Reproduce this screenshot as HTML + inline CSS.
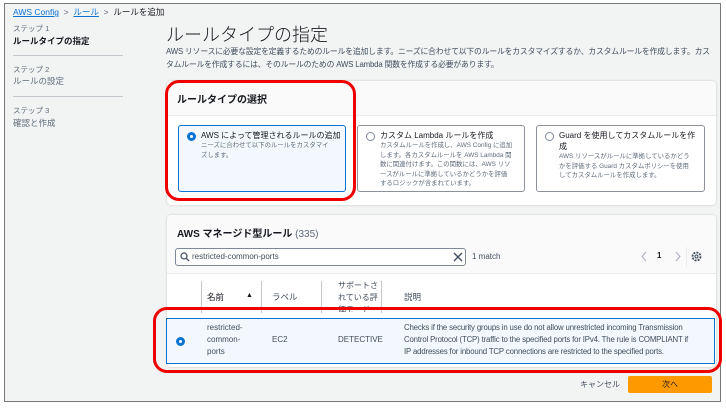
<!DOCTYPE html><html><head><meta charset="utf-8"><style>
*{margin:0;padding:0;box-sizing:border-box}
body{width:726px;height:409px;background:#fff;font-family:"Liberation Sans","Noto Sans CJK JP",sans-serif;color:#16191f;position:relative;overflow:hidden}
.a{position:absolute;white-space:nowrap}
.frame{position:absolute;left:4px;top:3px;width:717px;height:399px;border:1px solid #777;background:#f2f3f3}
.s{font-size:7.5px;color:#5f6b7a}
.link{color:#0972d3;text-decoration:underline}
.panel{position:absolute;background:#fff;border-radius:4px;box-shadow:0 0 2px rgba(0,0,0,.2)}
.card{position:absolute;border:1px solid #8d9199;border-radius:3px;background:#fff;padding:4px 4px 0 22px;font-size:8px;line-height:11px;white-space:nowrap;overflow:hidden}
.card small{display:block;font-size:6.4px;line-height:9.5px;color:#5f6b7a}
.rad{position:absolute;left:8px;top:6px;width:9px;height:9px;border:1px solid #7d8998;border-radius:50%;background:#fff}
.rad.on{border:3px solid #0972d3}
.red{position:absolute;border:3px solid #e00;border-radius:14px}
.th{font-size:8.5px;color:#16191f}
.sep{position:absolute;width:1px;background:#c6c6cd}
</style></head><body>
<div class="frame"></div>
<div class="a" style="left:13px;top:6px;font-size:8.5px"><span class="link">AWS Config</span> <span style="color:#5f6b7a">&nbsp;&gt;&nbsp;</span> <span class="link">ルール</span> <span style="color:#5f6b7a">&nbsp;&gt;&nbsp;</span> ルールを追加</div>
<div class="a s" style="left:13px;top:23px">ステップ 1</div>
<div class="a" style="left:13px;top:35px;font-size:8.5px;font-weight:bold">ルールタイプの指定</div>
<div class="a" style="left:13px;top:55px;width:110px;height:1px;background:#c6c6cd"></div>
<div class="a s" style="left:13px;top:64px">ステップ 2</div>
<div class="a" style="left:13px;top:75px;font-size:8.5px;color:#5f6b7a">ルールの設定</div>
<div class="a" style="left:13px;top:96px;width:110px;height:1px;background:#c6c6cd"></div>
<div class="a s" style="left:13px;top:105px">ステップ 3</div>
<div class="a" style="left:13px;top:117px;font-size:8.5px;color:#5f6b7a">確認と作成</div>
<div class="a" style="left:166px;top:21px;font-size:18px;font-weight:300">ルールタイプの指定</div>
<div class="a" style="left:166px;top:45px;font-size:7.8px;line-height:13px;color:#414d5c;letter-spacing:-0.15px">AWS リソースに必要な設定を定義するためのルールを追加します。ニーズに合わせて以下のルールをカスタマイズするか、カスタムルールを作成します。カス<br>タムルールを作成するには、そのルールのための AWS Lambda 関数を作成する必要があります。</div>

<div class="panel" style="left:167px;top:81px;width:549px;height:124px">
 <div style="height:35px;background:#fafafa;border-bottom:1px solid #e9ebed;border-radius:4px 4px 0 0"></div>
</div>
<div class="a" style="left:177px;top:91px;font-size:10px;font-weight:bold">ルールタイプの選択</div>
<div class="card" style="left:178px;top:125px;width:168px;height:67px;background:#f2f8fd;border-color:#0972d3"><span class="rad on"></span>AWS によって管理されるルールの追加<small>ニーズに合わせて以下のルールをカスタマイ<br>ズします。</small></div>
<div class="card" style="left:357px;top:125px;width:168px;height:67px"><span class="rad"></span>カスタム Lambda ルールを作成<small>カスタムルールを作成し、AWS Config に追加<br>します。各カスタムルールを AWS Lambda 関<br>数に関連付けます。この関数には、AWS リソ<br>ースがルールに準拠しているかどうかを評価<br>するロジックが含まれています。</small></div>
<div class="card" style="left:536px;top:125px;width:169px;height:67px"><span class="rad"></span>Guard を使用してカスタムルールを作<br>成<small>AWS リソースがルールに準拠しているかどう<br>かを評価する Guard カスタムポリシーを使用<br>してカスタムルールを作成します。</small></div>
<div class="red" style="left:165px;top:80px;width:191px;height:121px"></div>

<div class="panel" style="left:167px;top:215px;width:549px;height:152px">
 <div style="height:59px;background:#fafafa;border-bottom:1px solid #e9ebed;border-radius:4px 4px 0 0"></div>
</div>
<div class="a" style="left:177px;top:225px;font-size:10px;font-weight:bold">AWS マネージド型ルール <span style="font-weight:normal;color:#5f6b7a">(335)</span></div>
<div class="a" style="left:175px;top:248px;width:291px;height:18px;border:1px solid #7d8998;border-radius:3px;background:#fff"></div>
<svg class="a" style="left:180px;top:252px" width="10" height="10"><circle cx="4" cy="4" r="3" fill="none" stroke="#414d5c" stroke-width="1.2"/><line x1="6.3" y1="6.3" x2="9" y2="9" stroke="#414d5c" stroke-width="1.3"/></svg>
<div class="a" style="left:192px;top:252px;font-size:8px;color:#414d5c">restricted-common-ports</div>
<svg class="a" style="left:453px;top:252px" width="10" height="10"><path d="M1 1L9 9M9 1L1 9" stroke="#414d5c" stroke-width="1.4"/></svg>
<div class="a" style="left:472px;top:252px;font-size:8px;color:#414d5c">1 match</div>
<svg class="a" style="left:641px;top:251px" width="40" height="11"><path d="M5 1L1 5.5L5 10" fill="none" stroke="#aab" stroke-width="1"/><path d="M35 1L39 5.5L35 10" fill="none" stroke="#aab" stroke-width="1"/></svg>
<div class="a" style="left:657px;top:251px;font-size:8px;font-weight:bold">1</div>
<div class="a" style="left:686px;top:247px;width:1px;height:20px;background:#e9ebed"></div>
<svg class="a" style="left:691px;top:251px" width="11" height="11"><circle cx="5.5" cy="5.5" r="4" fill="none" stroke="#414d5c" stroke-width="1.8" stroke-dasharray="2 1.1"/><circle cx="5.5" cy="5.5" r="1.5" fill="none" stroke="#414d5c"/></svg>

<div class="sep" style="left:201px;top:281px;height:32px"></div>
<div class="a th" style="left:207px;top:291px">名前</div>
<div class="a" style="left:246px;top:292px;font-size:7px">▲</div>
<div class="sep" style="left:261px;top:281px;height:32px"></div>
<div class="a th" style="left:272px;top:291px;color:#414d5c">ラベル</div>
<div class="sep" style="left:321px;top:281px;height:32px"></div>
<div class="a th" style="left:338px;top:280px;font-size:8px;line-height:12px;height:32px;overflow:hidden;white-space:normal;width:40px;color:#414d5c">サポートされている評価モード</div>
<div class="sep" style="left:381px;top:281px;height:32px"></div>
<div class="a th" style="left:404px;top:291px;color:#414d5c">説明</div>

<div class="a" style="left:166px;top:318px;width:549px;height:46px;background:#f2f8fd;border:1px solid #0972d3"></div>
<div class="a" style="left:176px;top:337px;width:9px;height:9px;border:3px solid #0972d3;border-radius:50%;background:#fff"></div>
<div class="a" style="left:207px;top:322px;font-size:8px;line-height:12px;color:#414d5c">restricted-<br>common-<br>ports</div>
<div class="a" style="left:272px;top:335px;font-size:8px;color:#414d5c">EC2</div>
<div class="a" style="left:338px;top:335px;font-size:8px;color:#414d5c">DETECTIVE</div>
<div class="a" style="left:404px;top:322px;font-size:7.8px;line-height:12px;color:#414d5c;letter-spacing:-0.15px">Checks if the security groups in use do not allow unrestricted incoming Transmission<br>Control Protocol (TCP) traffic to the specified ports for IPv4. The rule is COMPLIANT if<br>IP addresses for inbound TCP connections are restricted to the specified ports.</div>
<div class="red" style="left:153px;top:307px;width:569px;height:66px"></div>

<div class="a" style="left:580px;top:379px;font-size:8px;color:#414d5c">キャンセル</div>
<div class="a" style="left:628px;top:376px;width:84px;height:17px;background:#ff9900;border-radius:2px;font-size:8px;text-align:center;line-height:17px">次へ</div>
</body></html>
